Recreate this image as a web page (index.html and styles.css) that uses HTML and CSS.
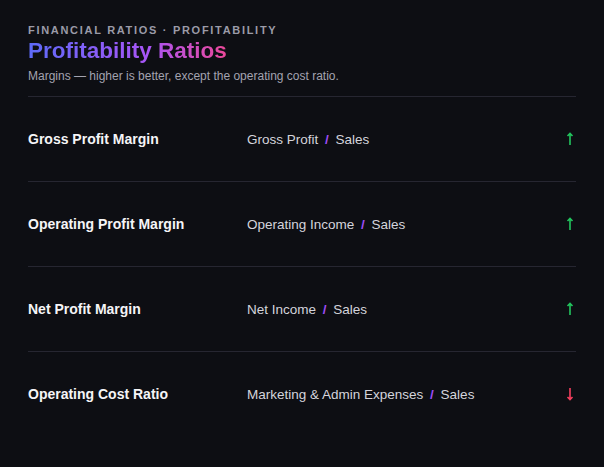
FILE: index.html
```html
<!DOCTYPE html>
<html lang="en">
<head>
<meta charset="utf-8">
<link rel="stylesheet" href="styles.css">
</head>
<body>
<main class="page">
  <header class="head">
    <div class="eyebrow">Financial Ratios · Profitability</div>
    <h1 class="title">Profitability Ratios</h1>
    <p class="sub">Margins — higher is better, except the operating cost ratio.</p>
  </header>
  <ul class="rows">
    <li class="row">
      <span class="label">Gross Profit Margin</span>
      <span class="formula">Gross Profit <span class="slash">/</span> Sales</span>
      <svg class="arrow up" width="8" height="14" viewBox="0 0 8 14"><path d="M4 1.5V13M1.5 4L4 1.5L6.5 4" fill="none" stroke="currentColor" stroke-width="1.6"/></svg>
    </li>
    <li class="row">
      <span class="label">Operating Profit Margin</span>
      <span class="formula">Operating Income <span class="slash">/</span> Sales</span>
      <svg class="arrow up" width="8" height="14" viewBox="0 0 8 14"><path d="M4 1.5V13M1.5 4L4 1.5L6.5 4" fill="none" stroke="currentColor" stroke-width="1.6"/></svg>
    </li>
    <li class="row">
      <span class="label">Net Profit Margin</span>
      <span class="formula">Net Income <span class="slash">/</span> Sales</span>
      <svg class="arrow up" width="8" height="14" viewBox="0 0 8 14"><path d="M4 1.5V13M1.5 4L4 1.5L6.5 4" fill="none" stroke="currentColor" stroke-width="1.6"/></svg>
    </li>
    <li class="row">
      <span class="label">Operating Cost Ratio</span>
      <span class="formula">Marketing &amp; Admin Expenses <span class="slash">/</span> Sales</span>
      <svg class="arrow down" width="8" height="14" viewBox="0 0 8 14"><path d="M4 1V12.5M1.5 10L4 12.5L6.5 10" fill="none" stroke="currentColor" stroke-width="1.6"/></svg>
    </li>
  </ul>
</main>
</body>
</html>
```

FILE: styles.css
```css
html, body {
  margin: 0;
  padding: 0;
  background: #0d0e13;
}
body {
  font-family: "Liberation Sans", Arial, sans-serif;
  color: #f3f4f6;
}
.page {
  padding: 24px 28px 0 28px;
}
.head {
  padding-bottom: 12px;
  border-bottom: 1px solid #262631;
}
.eyebrow {
  font-size: 11px;
  font-weight: 700;
  letter-spacing: 1.7px;
  text-transform: uppercase;
  color: #9b9ba8;
  line-height: 13px;
}
.title {
  margin: 1px 0 0 0;
  font-size: 22.5px;
  line-height: 26px;
  font-weight: 700;
  background: linear-gradient(90deg, #5d6af8 0%, #a855f7 60%, #ec4899 100%);
  -webkit-background-clip: text;
  background-clip: text;
  color: transparent;
  display: block;
  width: max-content;
}
.sub {
  margin: 5px 0 0 0;
  font-size: 12px;
  line-height: 15px;
  color: #a3a3b0;
}
.rows {
  list-style: none;
  margin: 0;
  padding: 0;
}
.row {
  display: grid;
  grid-template-columns: 219px 1fr auto;
  align-items: center;
  height: 84px;
  border-bottom: 1px solid #262631;
}
.row:last-child {
  border-bottom: none;
}
.label {
  font-size: 14px;
  font-weight: 700;
  color: #f5f5f7;
}
.formula {
  font-size: 13.5px;
  color: #d4d4dc;
}
.slash {
  color: #9d4cf5;
  font-weight: 700;
  margin: 0 3px;
}
.arrow {
  display: block;
  margin-right: 2px;
}
.arrow.up {
  color: #22c55e;
}
.arrow.down {
  color: #f43f5e;
}
```
